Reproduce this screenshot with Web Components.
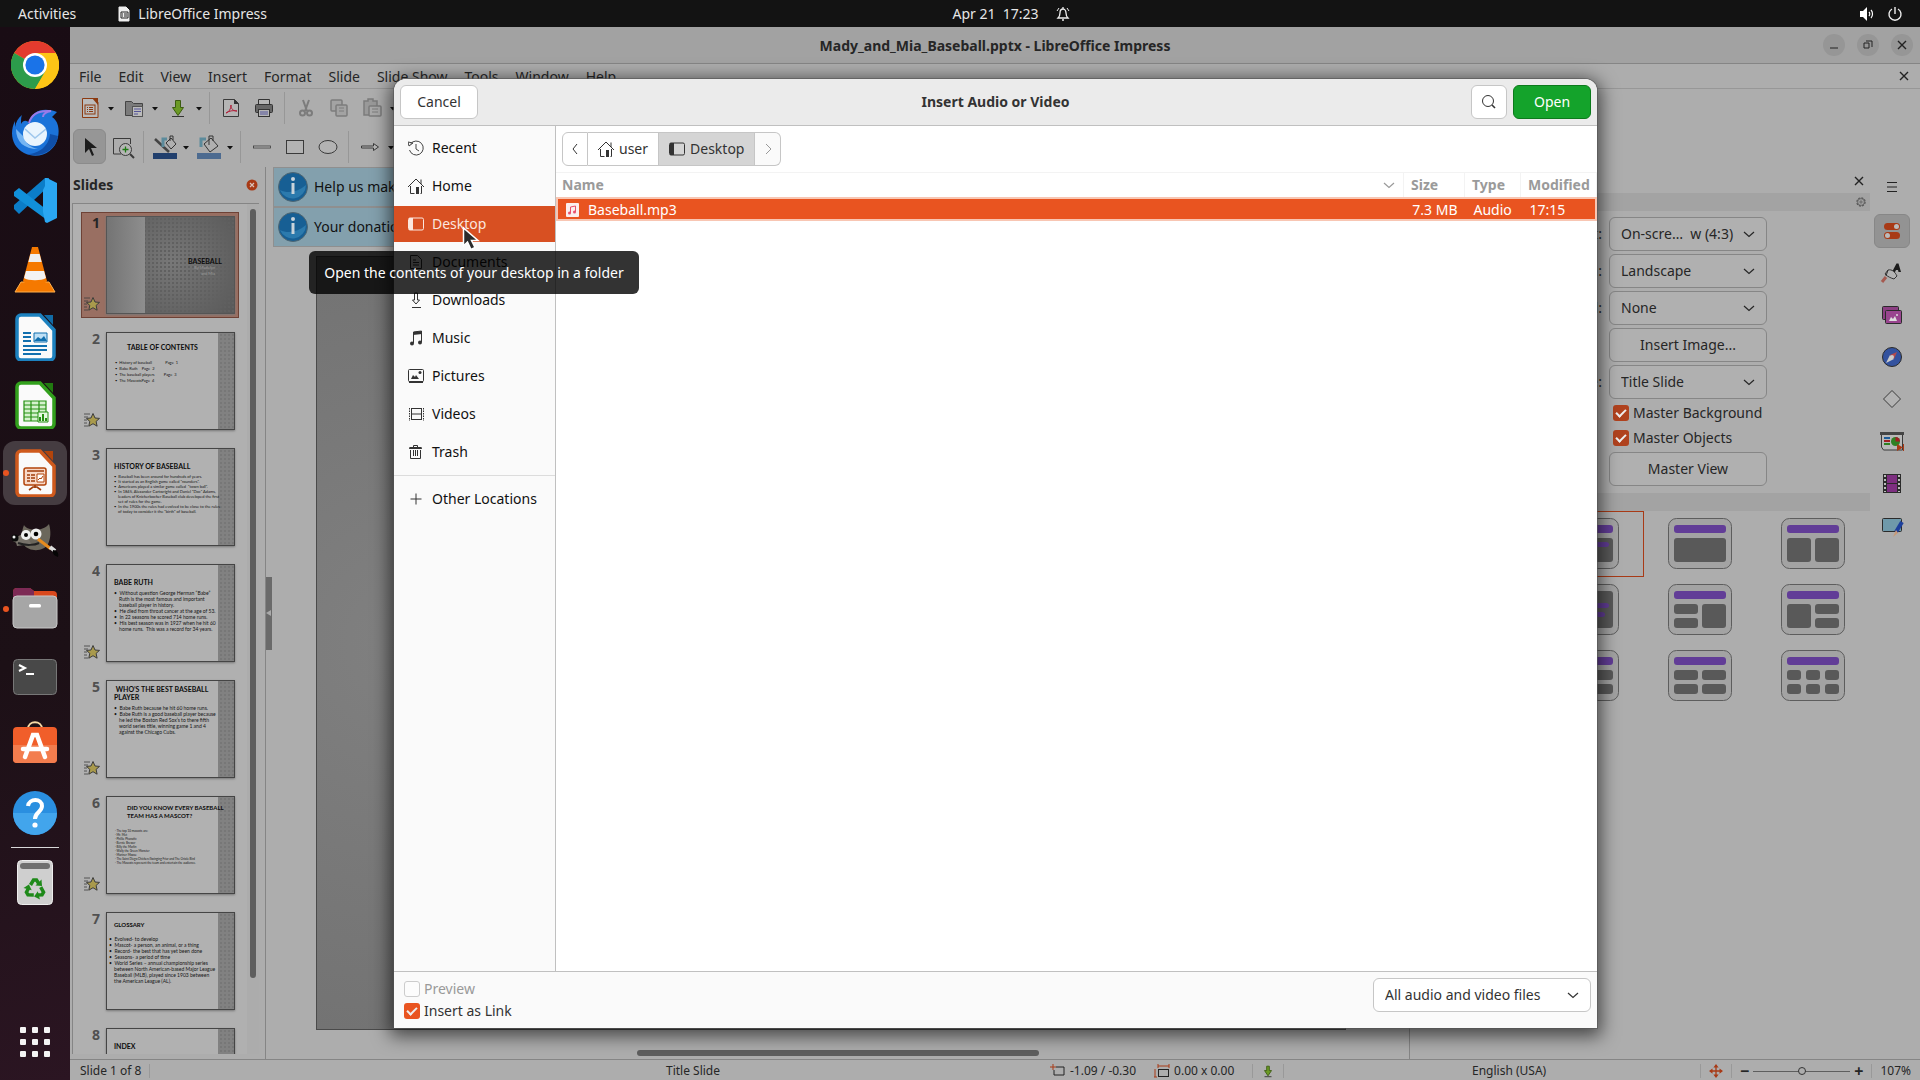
<!DOCTYPE html>
<html lang="en">
<head>
    <meta charset="UTF-8">
    <meta name="viewport" content="width=device-width, initial-scale=1.0">
    <title>LibreOffice Impress</title>
    <style>
        html, body{
            margin:0;
            height:100%;
        }
        body{
            --line:#858585;
            --accent:#e95420;
            display:flex;
            flex-direction:column;
            overflow:hidden;
            background:#adadad;
            color:#262626;
            font:14px/20px "Noto Sans", "Open Sans", sans-serif;
        }
        .desktop{
            flex:1;
            display:flex;
            min-height:0;
        }
    </style>
</head>
<body>
    <top-bar></top-bar>
    <div class="desktop">
        <app-dock></app-dock>
        <impress-window>Mady_and_Mia_Baseball.pptx - LibreOffice Impress</impress-window>
    </div>
    <file-dialog>Insert Audio or Video</file-dialog>
    <tool-tip>Open the contents of your desktop in a folder</tool-tip>
    <mouse-pointer></mouse-pointer>
</body>
<script>
    // name: [viewBox size, markup]
    const ICONS = {
        // ---- top bar ----
        doc: [16, '<path d="M3 1h7l3 3v11H3z" fill="#eee" stroke="#eee" stroke-linejoin="round"/><path d="M5 6h7v6H5zM6 8h1m1 0h3M6 10h1m1 0h3" fill="none" stroke="#222"/>'],
        bell: [16, '<path d="M3 12h10c-1-1-2-2-2-5 0-2-1-4-3-4S5 5 5 7c0 3-1 4-2 5zM7 14h2M8 1v2" fill="none" stroke="#eee" stroke-width="1.300"/><path d="M2 5l2-3M14 5l-2-3" stroke="#eee"/>'],
        sound: [16, '<path d="M1 5h3l4-4v14l-4-4H1z" fill="#fff"/><path d="M10 6c1 1 1 3 0 4M12 4c2 2 2 6 0 8" fill="none" stroke="#fff" stroke-width="1.2"/>'],
        power: [16, '<path d="M5 3a6 6 0 1 0 6 0M8 1v7" fill="none" stroke="#eee" stroke-width="1.4"/>'],
        // ---- dock ----
        chrome: [48, '<circle cx="24" cy="24" r="24" fill="#fbbc05"/><path d="M24 24 3.2 12A24 24 0 0 1 44.8 12z" fill="#e33b2e"/><path d="M3.2 12A24 24 0 0 0 24 48l11-18-11-6z" fill="#2c9c4b"/><path d="M24 12h20.8A24 24 0 0 1 24 48l10.4-18z" fill="#fdc516"/><circle cx="24" cy="24" r="12" fill="#fff"/><circle cx="24" cy="24" r="9.6" fill="#1a73e8"/>'],
        thunderbird: [48, '<path d="M4 12C-2 24 1 38 13 44c14 7 31 0 34-16 2-10-1-17-6-20l5-5C38 0 29 0 24 4c-4 3-5 7-6 10-2-3-6-3-8 1 0-4 0-7 1-9-4 3-6 7-7 12z" fill="#1b73d9"/><path d="M18 14c2-8 8-13 22-12-5 1-8 3-8 6" fill="none" stroke="#9b7be8" stroke-width="2"/><path d="M47 27C45 41 31 49 16 45c12 0 22-8 23-20z" fill="#0f4fa8"/><path d="M5 20c0 13 8 20 22 20-8-2-13-6-14-12z" fill="#75b5f3"/><circle cx="24" cy="25" r="12" fill="#e9f4fd"/><path d="M14 20l10 9 11-9" fill="none" stroke="#9fc7ec" stroke-width="1.6"/>'],
        vscode: [48, '<path d="M3 32l5 5 30-28V1h-4L3 28z" fill="#0b7dc8"/><path d="M3 15l5-4 28 22v10L3 19z" fill="#1190da"/><path d="M34 1v8l-2 4v22l2 10 2 1 10-5V6L36 1z" fill="#2aa7f2"/>'],
        vlc: [48, '<path d="M10 37h28l6 10H4z" fill="#f57900" stroke="#ffb04d"/><path d="M21 2h6l9 34c-3 5-21 5-24 0z" fill="#f57900"/><path d="M19.4 9h9.2l2 8H17.4z" fill="#eee"/><path d="M15 26h18l2 7c-4 3-18 3-22 0z" fill="#f3f3f3"/>'],
        writer: [48, '<path d="M10 2h19l14 15v26a4 4 0 0 1-4 4H10a4 4 0 0 1-4-4V6a4 4 0 0 1 4-4z" fill="#fafafa" stroke="#1c81bf" stroke-width="3.5"/><path d="M33 2h9v10z" fill="#116ba6"/><g fill="#116fae"><path d="M12 19h8v2h-8zM12 23h8v2h-8zM12 27h8v2h-8zM12 32h24v2H12zM12 36h24v2H12zM12 40h18v2H12z"/></g><path d="M23 20h13v9H23z" fill="#bfe0f6" stroke="#116fae"/><path d="M23 28l4-4 3 2 3-3 3 5z" fill="#116fae"/>'],
        calc: [48, '<path d="M10 2h19l14 15v26a4 4 0 0 1-4 4H10a4 4 0 0 1-4-4V6a4 4 0 0 1 4-4z" fill="#fafafa" stroke="#32a01c" stroke-width="3.5"/><path d="M33 2h9v10z" fill="#217a10"/><path d="M13 20h22v20H13zM13 24h22M13 28h22M13 32h22M13 36h22M20 20v20M28 20v20" fill="#d5f2cd" stroke="#258f12" stroke-width="1.2"/><path d="M27 31h10v10H27z" fill="#e4f7df" stroke="#258f12"/><path d="M29 40v-4M32 40v-7M35 40v-3" stroke="#258f12" stroke-width="2"/>'],
        impress: [48, '<path d="M10 2h19l14 15v26a4 4 0 0 1-4 4H10a4 4 0 0 1-4-4V6a4 4 0 0 1 4-4z" fill="#fafafa" stroke="#cf5a1d" stroke-width="3.5"/><path d="M33 2h9v10z" fill="#b2440b"/><rect x="13" y="19" width="22" height="17" rx="2" fill="#f8d9c8" stroke="#b2440b" stroke-width="1.5"/><path d="M16 22h17M16 26h3m1 0h4M16 29h3m1 0h4M16 32h3m1 0h4M24 36v3M18 41l4-3h4l4 3" fill="none" stroke="#a03c0a" stroke-width="1.6"/><path d="M26 25h7v8h-7zM27 31l2-2 1 1 2-3" fill="#fff" stroke="#b2440b"/>'],
        gimp: [48, '<g transform="translate(0 5)"><path d="M12 16c-2-5 0-10 1-13 4 7 20 6 25-1 2 7 2 14-1 20-4 8-19 8-24 1C7 22 5 21 2 19l3-2z" fill="#6b675c"/><path d="M4 16l11-6 5 12-14 2z" fill="#77726a"/><circle cx="15" cy="13" r="5" fill="#eee"/><circle cx="25" cy="12" r="5.5" fill="#eee"/><circle cx="15" cy="13" r="2"/><circle cx="25" cy="12" r="2.3"/><circle cx="4" cy="16" r="3.5" fill="#0a0a0a"/><circle cx="3" cy="15" r="1.500" fill="#eee"/><path d="M7 21c8 3 17 2 21 0" stroke="#222" stroke-width="2" fill="none"/><path d="M27 17l13 10" stroke="#e68a1d" stroke-width="3"/><path d="M39 25l5 4" stroke="#ddd" stroke-width="4"/><path d="M42 28c4 0 6 3 5 7-3-1-6-3-5-7z" fill="#050505"/></g>'],
        files: [48, '<path d="M2 13V7a4 4 0 0 1 4-4h13l4 3h19a4 4 0 0 1 4 4v8H2z" fill="#d9481c"/><path d="M2 13V7a4 4 0 0 1 4-4h13l4 3v10H2z" fill="#7d2a55"/><rect x="2" y="11" width="44" height="32" rx="4" fill="#a6a6a6" stroke="#c8c8c8"/><rect x="18" y="19" width="12" height="3.5" rx="1.5" fill="#fff"/>'],
        terminal: [48, '<rect x="2.500" y="6.500" width="43" height="35" rx="4" fill="#484848" stroke="#777"/><path d="M8 12l6 3-6 3M15 21h8" fill="none" stroke="#fff" stroke-width="2"/>'],
        store: [48, '<path d="M17 8c0-9 14-9 14 0" fill="none" stroke="#f7d9a6" stroke-width="2"/><rect x="2" y="6" width="44" height="36" rx="4" fill="#f15e2a"/><path d="M2 24h44v14a4 4 0 0 1-4 4H6a4 4 0 0 1-4-4z" fill="#f37d4e"/><path d="M14 36l8-22h4l8 22M12 28h24" fill="none" stroke="#fff" stroke-width="4.500" stroke-linecap="round"/>'],
        help: [48, '<circle cx="24" cy="24" r="22" fill="#2a8fe0"/><path d="M2 24a22 22 0 0 0 44 0z" fill="#42a5ec"/><path d="M17 17c1-8 14-8 14 0 0 6-7 6-7 13" fill="none" stroke="#fff" stroke-width="4"/><circle cx="24" cy="36" r="2.600" fill="#fff"/>'],
        bin: [48, '<rect x="6.500" y="2.500" width="35" height="44" rx="4" fill="#cfcfcf" stroke="#eee"/><rect x="9" y="5" width="30" height="6" rx="3" fill="#6f6f6f"/>' + [0, 120, 240].map(a => `<g transform="rotate(${a} 24 31)"><path d="M19.500 27l3-5h3l2.500 4" fill="none" stroke="#1f8a1a" stroke-width="3.500"/><path d="M24.500 27.500l6.500.5-.5-6.500z" fill="#1f8a1a"/></g>`).join('')],
        grid: [48, '<g fill="#f4f4f4">' + [9, 21, 33].map(y => [9, 21, 33].map(x => `<rect x="${x}" y="${y}" width="6" height="6" rx="1"/>`).join('')).join('') + '</g>'],
        // ---- window chrome ----
        min: [16, '<path d="M4 11h8" stroke="#222"/>'],
        max: [16, '<path d="M4 6h5v5H4zM6 4h6v6" fill="none" stroke="#222"/>'],
        close: [16, '<path d="M4 4l8 8M12 4l-8 8" stroke="#222" stroke-width="1.400"/>'],
        // ---- toolbars ----
        newdoc: [24, '<path d="M7 2.500h9l4 4v15H4.500V2.500z" fill="#bbb" stroke="#8c3a10"/><path d="M14 2h6v7z" fill="#8c3a10"/><rect x="7" y="9" width="10" height="9" fill="none" stroke="#8c3a10"/><path d="M9 11.500h1m1 0h4M9 13.500h1m1 0h4M9 15.500h1m1 0h4" stroke="#8c3a10"/>'],
        open: [24, '<path d="M3.500 19.500V5.500h6l2 2h9v12z" fill="#7b7b7b" stroke="#444"/><rect x="10.500" y="10.500" width="10" height="10" fill="#bbb" stroke="#555"/><path d="M12 13h7M12 15.500h7M12 18h4" stroke="#55559a"/>'],
        save: [24, '<path d="M9.500 4.500h5v7h3l-5.500 8-5.500-8h3z" fill="#6b9a25" stroke="#3c5c10"/><path d="M6 20.500h12" stroke="#333"/>'],
        saved: [16, '<path d="M6.500 2.500h3v5h2.500l-4 6-4-6h2.500z" fill="#6b9a25" stroke="#3c5c10"/><path d="M4 14.500h8" stroke="#333"/>'],
        pdf: [24, '<path d="M4.500 3.500h11l4 4v13h-15z" fill="#b5b5b5" stroke="#3a3a3a"/><path d="M15 3v5h5z" fill="#333"/><path d="M7 17c3-1 5-4 5-8 0 4 2 6 6 6-4-1-8 0-11 2z" fill="none" stroke="#b0203a"/>'],
        print: [24, '<path d="M6.500 9V3.500h11V9" fill="#b5b5b5" stroke="#333"/><rect x="3.500" y="8.500" width="17" height="8" rx="1" fill="#666" stroke="#333"/><rect x="6.500" y="13.500" width="11" height="7" fill="#b5b5b5" stroke="#333"/><path d="M8 16h8M8 18h8" stroke="#55559a"/>'],
        cut: [24, '<g fill="none" stroke="#7c7c7c" stroke-width="2"><path d="M9 4l4 11M15 4l-4 11"/><circle cx="8.500" cy="17" r="2.500"/><circle cx="15.500" cy="17" r="2.500"/></g>'],
        copy: [24, '<g fill="#a3a3a3" stroke="#7c7c7c" stroke-width="1.500"><rect x="4" y="4" width="11" height="11" rx="1"/><rect x="9" y="9" width="11" height="11" rx="1"/></g><path d="M12 12h5M12 15h5" stroke="#7c7c7c"/>'],
        paste: [24, '<g fill="#999" stroke="#7c7c7c" stroke-width="1.500"><path d="M4 5h4V3h5v2h4v14H4z"/><rect x="9" y="10" width="12" height="10" rx="1" fill="#a9a9a9"/></g><path d="M12 13h6M12 16h6" stroke="#7c7c7c"/>'],
        pointer: [24, '<path d="M7 3v15l4-4 3 7 2-1-3-7h6z" fill="#1c1c1c"/>'],
        zoom: [24, '<path d="M10 19H2.500V3.500h17V9" fill="none" stroke="#3a3a3a"/><circle cx="14.500" cy="14.500" r="6" fill="#b5b5b5" stroke="#3a3a3a"/><path d="M19 19l4 4" stroke="#3a3a3a" stroke-width="2"/><path d="M11.500 14.500h6M14.500 11.500v6" stroke="#1d7a12" stroke-width="1.300"/>'],
        linecolor: [24, '<path d="M2 4l14 13" stroke="#444" stroke-width="2.500"/><path d="M10 12V4h4" fill="none" stroke="#5c8b9c" stroke-width="3"/><path d="M13 8l5-5 5 6-5 5zM17 6V1h3v4" fill="#b0b0b0" stroke="#333"/><path d="M0 18h24v6H0z" fill="#213f6d"/>'],
        fillcolor: [24, '<path d="M4 12V4h5" fill="none" stroke="#5c8b9c" stroke-width="3"/><path d="M7 9l7-6 7 8-8 6zM12 10V1h4v5" fill="#b0b0b0" stroke="#333"/><path d="M0 18h24v6H0z" fill="#4d6b90"/>'],
        line: [24, '<rect x="3.500" y="11" width="17" height="2" fill="#bbb" stroke="#3a3a3a" stroke-width=".8"/>'],
        rect: [24, '<rect x="3.500" y="5.500" width="17" height="13" fill="#b3b3b3" stroke="#3a3a3a"/>'],
        ellipse: [24, '<ellipse cx="12" cy="12" rx="9" ry="6.500" fill="#b3b3b3" stroke="#3a3a3a"/>'],
        arrow: [24, '<path d="M3.500 11h12V8.500l5 3.500-5 3.500V13h-12z" fill="#b8b8b8" stroke="#3a3a3a"/>'],
        caret: [10, '<path d="M2 4h6L5 7.500z" fill="#111"/>'],
        closered: [12, '<circle cx="6" cy="6" r="5.500" fill="#a83a16"/><path d="M4 4l4 4M8 4l-4 4" stroke="#d9c3bb" stroke-width="1.200"/>'],
        info: [32, '<circle cx="16" cy="16" r="14.500" fill="#175f94" stroke="#4f6672"/><path d="M3 19c8 4 18 2 26-5a13.500 13.500 0 0 1-26 5z" fill="#2c7aad"/><circle cx="16" cy="8" r="2" fill="#c8d3da"/><path d="M16 12v11" stroke="#c8d3da" stroke-width="3"/>'],
        star: [16, '<path d="M9 1.500l2 4.500 4.500.4-3.400 3 1 4.800L9 11.700l-4.200 2.500 1-4.800-3.300-3L7 6z" fill="#a99a4c" stroke="#3c3c3c"/><path d="M0 2h6M0 5h4M0 8h3M0 11h3M0 14h4" stroke="#3c3c3c" stroke-width=".8"/>'],
        // ---- sidebar ----
        gear: [16, '<circle cx="8" cy="8" r="5.500" fill="none" stroke="#555" stroke-width="1.500" stroke-dasharray="2.800 1.500"/><circle cx="8" cy="8" r="4.500" fill="none" stroke="#555"/><circle cx="8" cy="8" r="1.500" fill="none" stroke="#555"/>'],
        menu: [16, '<path d="M3 3.500h10M3 8h10M3 12.500h10" stroke="#222"/>'],
        props: [24, '<rect x="4" y="4" width="16" height="7" rx="3.500" fill="#a83a16"/><rect x="4" y="13" width="16" height="7" rx="3.500" fill="#a83a16"/><circle cx="16.500" cy="7.500" r="2.500" fill="#bbb"/><circle cx="7.500" cy="16.500" r="2.500" fill="#bbb"/>'],
        styles: [24, '<path d="M12 11l4.500-8.500h2L21 11h-2.500l-.5-2h-2l-1 2z" fill="#1c1c1c"/><path d="M5 13l3-4c4-1 7 2 9 6l-3 3c-3-1-6-2-9-5zM8 9l-2 6" fill="#b3b3b3" stroke="#333"/><path d="M6 16l-4 5" stroke="#a55a50" stroke-width="3"/>'],
        gallery: [24, '<rect x="2.500" y="3.500" width="16" height="13" rx="1" fill="#8b3f82" stroke="#2b2b2b"/><rect x="5.500" y="7.500" width="16" height="13" rx="1" fill="#99458f" stroke="#2b2b2b"/><path d="M9 18l2-4 2 2 2-3 2 5z" fill="#ddd"/><circle cx="17" cy="12" r="1" fill="#ddd"/>'],
        navigator: [24, '<circle cx="12" cy="12" r="9.500" fill="#33529f" stroke="#2b2b2b"/><path d="M6 18l4-8 4 4z" fill="#ccc"/><path d="M17 7l-7 3 4 4z" fill="#b54b4b"/><circle cx="12" cy="12" r="2" fill="#ccc"/>'],
        shapes: [24, '<path d="M12 3.500l8.500 8.500-8.500 8.500L3.500 12z" fill="#b3b3b3" stroke="#3a3a3a"/>'],
        transition: [24, '<path d="M0 3h24v3H0z" fill="#444"/><path d="M1.500 6v12l2 3h19V6" fill="#b8b8b8" stroke="#3a3a3a"/><path d="M4 9h6" stroke="#1b5b99" stroke-width="2"/><path d="M4 12h6" stroke="#a31d24" stroke-width="2"/><path d="M4 15h6" stroke="#2f8023" stroke-width="2"/><circle cx="15.500" cy="12.500" r="4.500" fill="#2f8023"/><path d="M15.500 12.500V8a4.500 4.500 0 0 1 4.500 4.500z" fill="#a31d24"/><path d="M17 15l6 3.500-6 3.500zM23 15h1v7h-1z" fill="#a83a16"/>'],
        film: [24, '<rect x="3" y="3" width="18" height="19" fill="#2b2b2b"/><path d="M7 4h10v8H7zM7 13h10v8H7z" fill="#7d2f80"/><path d="M5 4v17M19 4v17" stroke="#bbb" stroke-width="2" stroke-dasharray="2 2"/>'],
        master: [24, '<rect x="2.500" y="5.500" width="19" height="13" rx="1" fill="#6f99aa" stroke="#2b2b2b"/><path d="M22 9l-6 10" stroke="#1d3f9c" stroke-width="4"/><path d="M16 17l-3 7 5-4z" fill="#c99a77"/>'],
        // ---- status bar ----
        pos: [16, '<path d="M6 4h8v8H4V7" fill="none" stroke="#222"/><path d="M0 4h6M3 1v6" stroke="#a83a16"/>'],
        size: [16, '<rect x="4.500" y="6.500" width="10" height="7" fill="none" stroke="#222"/><path d="M4 3h11M4 1v4M15 1v4M1 6v8M0 14h3" stroke="#a83a16"/>'],
        move: [16, '<path d="M8 2v12M2 8h12" stroke="#a83a16" stroke-width="1.500"/><path d="M8 0l3 4H5zM8 16l3-4H5zM0 8l4-3v6zM16 8l-4-3v6z" fill="#a83a16"/>'],
        // ---- file dialog ----
        search: [16, '<circle cx="7" cy="7" r="5.500" fill="none" stroke="#333"/><path d="M11 11l3 3" stroke="#333" stroke-width="1.600"/>'],
        recent: [16, '<path d="M2.500 4a7 7 0 1 1-1 6" fill="none" stroke="#444"/><path d="M0 2l5 1-4 3zM8 4v5l3 2" stroke="#444" fill="none"/>'],
        home: [16, '<path d="M0 9l8-8 8 8M13 6V1.500M2.500 8v7.500h4M13.500 8v7.500h-1" fill="none" stroke="#333"/><path d="M8 9h3v7H8z" fill="#333"/>'],
        desktop: [16, '<rect x=".5" y="2" width="15" height="12" rx="1.500" fill="none" stroke="currentColor"/><path d="M1 2h4v12H1z" fill="currentColor"/>'],
        document: [16, '<path d="M2.500 1.500h7l4 4v9h-11zM5 6h3M5 8.500h6M5 11h6" fill="none" stroke="#333"/>'],
        download: [16, '<path d="M6.500 1v7h-2l3.500 4 3.500-4h-2V1zM4 15.500h9" fill="none" stroke="#333"/>'],
        music: [16, '<path d="M5.500 13V2l8-1v11" fill="none" stroke="#333"/><path d="M5 2l9-1v3L5 5z" fill="#333"/><circle cx="4" cy="13.500" r="2" fill="#333"/><circle cx="12" cy="12.500" r="2" fill="#333"/>'],
        picture: [16, '<rect x=".5" y="1.500" width="15" height="12" rx="1" fill="none" stroke="#333"/><path d="M1 13h14v2H1zM3 11l2-4 2 2 1-2 3 4z" fill="#333"/><circle cx="12" cy="4.500" r="1.500" fill="#333"/>'],
        video: [16, '<path d="M3.500 2v12M13.500 2v12M3 2.500h11M3 8h11M3 13.500h11" stroke="#333"/><path d="M1.500 2v13M15.500 2v13" stroke="#333" stroke-dasharray="1.500 1"/>'],
        trash: [16, '<path d="M1 4h13M5.500 3V1.500h4V3M2.500 6v8.500h10V6M5.500 6v6M7.500 6v6M9.500 6v6" fill="none" stroke="#333"/><path d="M2 3h11l1 2H1z" fill="#333"/>'],
        plus: [16, '<path d="M8 2.500v11M2.500 8h11" stroke="#333"/>'],
        left: [16, '<path d="M10 3L6 8l4 5" fill="none" stroke="#333"/>'],
        right: [16, '<path d="M6 3l5 5-5 5" fill="none" stroke="#999"/>'],
        down: [16, '<path d="M3 6l5 4.500L13 6" fill="none" stroke="currentColor" stroke-width="1.200"/>'],
        audio: [16, '<rect x="2" y="1" width="13" height="14" rx="1" fill="#fbeeee"/><path d="M6.500 11V5l5-1v6" fill="none" stroke="#e8506c"/><circle cx="5.500" cy="11" r="1.500" fill="#e8506c"/><circle cx="10.500" cy="10" r="1.500" fill="#e8506c"/>']
    };

    // Registers an element whose shadow root is cloned from the given markup.
    function component(name, html, setup) {
        const template = document.createElement('template');
        template.innerHTML = html;
        customElements.define(name, class extends HTMLElement {
            constructor() {
                super();
                this.attachShadow({ mode: 'open' }).appendChild(template.content.cloneNode(true));
            }
            connectedCallback() {
                if (setup) setup(this, this.shadowRoot);
            }
        });
    }

    component('ui-icon', `
        <style>
            :host{ display:inline-block; flex:none; }
            svg{ display:block; }
        </style>
        <svg aria-hidden="true"></svg>
    `, (el, root) => {
        const [box, body] = ICONS[el.getAttribute('name')];
        const size = el.getAttribute('size') || box;
        const svg = root.querySelector('svg');
        svg.setAttribute('viewBox', `0 0 ${box} ${box}`);
        svg.setAttribute('width', size);
        svg.setAttribute('height', size);
        svg.innerHTML = body;
    });

    component('top-bar', `
        <style>
            :host{
                display:grid;
                grid-template-columns:1fr auto 1fr;
                align-items:center;
                height:27px;
                padding:0 17px 0 18px;
                background:#131313;
                color:#e6e6e6;
            }
            div{ display:flex; align-items:center; }
            button{ all:unset; }
            .app{ display:flex; align-items:center; gap:6px; margin-left:40px; }
            .clock{ gap:16px; padding-left:102px; }
            .status{ justify-content:flex-end; gap:12px; }
        </style>
        <div><button>Activities</button><button class="app"><ui-icon name="doc"></ui-icon>LibreOffice Impress</button></div>
        <div class="clock"><button>Apr 21&nbsp; 17:23</button><ui-icon name="bell"></ui-icon></div>
        <div class="status"><ui-icon name="sound"></ui-icon><ui-icon name="power"></ui-icon></div>
    `);

    component('dock-item', `
        <style>
            :host{ display:flex; align-items:center; height:68px; }
            button{
                all:unset;
                display:flex;
                align-items:center;
                justify-content:center;
                width:64px;
                height:64px;
                margin-left:3px;
                border-radius:12px;
            }
            :host([active]) button{ background:#453c41; }
            i{
                position:absolute;
                left:3px;
                width:6px;
                height:6px;
                border-radius:3px;
                background:var(--accent);
                display:none;
            }
            :host([running]) i{ display:block; }
        </style>
        <i></i><button></button>
    `, (el, root) => {
        const button = root.querySelector('button');
        button.setAttribute('aria-label', el.getAttribute('icon'));
        button.innerHTML = `<ui-icon name="${el.getAttribute('icon')}"></ui-icon>`;
    });

    component('app-dock', `
        <style>
            :host{
                display:flex;
                flex-direction:column;
                flex:none;
                width:70px;
                padding:4px 0;
                box-sizing:border-box;
                background:linear-gradient(165deg,#190c14,#1c1016 60%,#2b1522);
            }
            hr{ width:48px; height:1px; margin:0 auto; border:0; background:#d8d8d8; }
            .apps{ margin-top:auto; }
        </style>
        <dock-item icon="chrome"></dock-item>
        <dock-item icon="thunderbird"></dock-item>
        <dock-item icon="vscode"></dock-item>
        <dock-item icon="vlc"></dock-item>
        <dock-item icon="writer"></dock-item>
        <dock-item icon="calc"></dock-item>
        <dock-item icon="impress" active running></dock-item>
        <dock-item icon="gimp"></dock-item>
        <dock-item icon="files" running></dock-item>
        <dock-item icon="terminal"></dock-item>
        <dock-item icon="store"></dock-item>
        <dock-item icon="help"></dock-item>
        <hr>
        <dock-item icon="bin"></dock-item>
        <dock-item class="apps" icon="grid"></dock-item>
    `);

    component('title-bar', `
        <style>
            :host{
                display:grid;
                grid-template-columns:1fr auto 1fr;
                align-items:center;
                height:36px;
                border-bottom:1px solid var(--line);
                background:#a2a2a2;
                font-weight:bold;
            }
            div{
                grid-column:3;
                display:flex;
                justify-content:flex-end;
                gap:12px;
                padding-right:7px;
            }
            button{
                all:unset;
                display:flex;
                padding:3px;
                border-radius:11px;
                background:#969696;
            }
            .name{ padding-top:1px; }
        </style>
        <span></span>
        <span class="name"><slot></slot></span>
        <div>
            <button aria-label="Minimize"><ui-icon name="min"></ui-icon></button>
            <button aria-label="Restore"><ui-icon name="max"></ui-icon></button>
            <button aria-label="Close"><ui-icon name="close"></ui-icon></button>
        </div>
    `);

    component('menu-bar', `
        <style>
            :host{
                display:flex;
                align-items:center;
                height:24px;
                padding:0 8px 0 9px;
                border-bottom:1px solid #979797;
            }
            nav{ flex:1; display:flex; gap:17px; padding-top:1px; }
            button{ all:unset; display:flex; }
        </style>
        <nav>
            <button>File</button><button>Edit</button><button>View</button><button>Insert</button>
            <button>Format</button><button>Slide</button><button>Slide Show</button>
            <button>Tools</button><button>Window</button><button>Help</button>
        </nav>
        <button aria-label="Close document"><ui-icon name="close"></ui-icon></button>
    `);

    component('tool-button', `
        <style>
            :host{ display:flex; align-items:center; }
            button{ all:unset; display:flex; }
            .main{
                justify-content:center;
                align-items:center;
                box-sizing:border-box;
                width:33px;
                height:35px;
                border:1px solid transparent;
                border-radius:6px;
            }
            .more{ width:11px; }
            :host([pressed]) .main{ background:#969696; border-color:#8b8b8b; }
            :host(:not([menu])) .more{ display:none; }
        </style>
        <button class="main"></button>
        <button class="more" aria-label="More"><ui-icon name="caret"></ui-icon></button>
    `, (el, root) => {
        const button = root.querySelector('.main');
        button.setAttribute('aria-label', el.getAttribute('icon'));
        button.innerHTML = `<ui-icon name="${el.getAttribute('icon')}"></ui-icon>`;
    });

    component('tool-bar', `
        <style>
            :host{ display:flex; align-items:center; height:37px; padding:0 0 2px 3px; }
            ::slotted(hr){
                width:1px;
                height:32px;
                margin:0 4px;
                border:0;
                background:#979797;
            }
        </style>
        <slot></slot>
    `);

    component('slide-thumb', `
        <style>
            :host{
                display:flex;
                box-sizing:border-box;
                height:106px;
                width:158px;
                margin-bottom:10px;
                padding:3px;
                border:1px solid transparent;
            }
            :host([selected]){ background:#996f62; border-color:#6e4236; }
            .side{
                display:flex;
                flex-direction:column;
                justify-content:space-between;
                align-items:flex-end;
                width:15px;
                padding:0 6px 2px 0;
                font-weight:bold;
                line-height:14px;
                color:#505050;
            }
            :host([selected]) .side{ color:#262626; }
            .side ui-icon{ visibility:hidden; }
            :host([effect]) .side ui-icon{ visibility:visible; }
            .page{
                flex:1;
                min-width:0;
                overflow:hidden;
                border:1px solid #454545;
                background:radial-gradient(#777 1px,transparent 1px) 0 0/4px 4px,#818181;
                box-shadow:0 1px 2px #777;
                font-family:Lato, sans-serif;
                color:#151515;
                white-space:nowrap;
            }
            .paper{ height:100%; margin-right:16px; background:#b1b1b1; }
            :host([cover]) .page{
                background:linear-gradient(90deg,#747474,#8e8e8e 38px,transparent 38px),
                    radial-gradient(#606060 1px,transparent 1px) 0 0/4px 4px,
                    radial-gradient(circle at 65px 45px,#787878,#585858);
                border-color:#555;
            }
            :host([cover]) .paper{ margin:0; background:none; }
        </style>
        <div class="side"><span></span><ui-icon name="star"></ui-icon></div>
        <div class="page"><div class="paper"><slot></slot></div></div>
    `, (el, root) => {
        root.querySelector('span').textContent = el.getAttribute('number');
    });

    component('slides-panel', `
        <style>
            :host{
                display:flex;
                flex-direction:column;
                flex:none;
                width:195px;
                border-right:1px solid var(--line);
            }
            header{
                display:flex;
                align-items:center;
                justify-content:space-between;
                height:36px;
                padding:0 7px 0 3px;
                font-weight:bold;
            }
            button{ all:unset; display:flex; }
            .list{
                flex:1;
                min-height:0;
                display:flex;
                justify-content:space-between;
                overflow:hidden;
                margin:0 6px 5px 2px;
                border-top:1px solid var(--line);
                border-left:1px solid var(--line);
                background:#b0b0b0;
            }
            .slides{ padding:8px 0 0 8px; }
            .track{ width:12px; background:#acacac; padding-top:5px; }
            .thumb{ width:6px; height:91%; margin-left:3px; border-radius:3px; background:#5e5e5e; }
            h6{ margin:0; font:bold 7px/8px "Liberation Sans Narrow", Lato, sans-serif; color:#0c0c0c; }
            p{ margin:0; font-size:4px; line-height:5px; white-space:pre; }
            .big p{ font-size:5px; line-height:6px; }
            .toc{ padding:10px 0 0 8px; }
            .toc h6{ margin:0 0 9px 12px; }
            .toc p{ margin-bottom:1px; }
            .std{ padding:13px 0 0 7px; }
            .std h6{ margin-bottom:4px; }
            .who{ padding-top:4px; }
            .mascot{ padding:7px 0 0 8px; }
            .mascot h6{ margin-left:12px; font-size:6px; }
            .mascot h6 + p{ margin-top:9px; }
            .mascot p{ font-size:3px; line-height:4px; }
            .gloss{ padding:8px 0 0 2px; }
            .gloss h6{ margin:0 0 7px 5px; font-size:6px; }
            .cover{ padding:40px 12px 0 0; text-align:right; }
            .cover p{ padding-right:7px; color:#9b9b9b; line-height:6px; }
        </style>
        <header>Slides<button aria-label="Close panel"><ui-icon name="closered"></ui-icon></button></header>
        <div class="list">
            <div class="slides">
                <slide-thumb number="1" selected effect cover><div class="cover"><h6>BASEBALL</h6><p>By Madelyn</p><p>and Mia</p></div></slide-thumb>
                <slide-thumb number="2" effect><div class="toc"><h6>TABLE OF CONTENTS</h6><p>•  History of baseball             Page  1</p><p>•  Babe Ruth    Page  2</p><p>•  The baseball players         Page  3</p><p>•  The MascotsPage  4</p></div></slide-thumb>
                <slide-thumb number="3"><div class="std"><h6>HISTORY OF BASEBALL</h6><p>•  Baseball has been around for hundreds of years.</p><p>•  It started as an English game called "rounders".</p><p>•  Americans played a similar game called  "town ball".</p><p>•  In 1845, Alexander Cartwright and Daniel "Doc" Adams,</p><p>    leaders of Knickerbocker Baseball club developed the first</p><p>    set of rules for the game.</p><p>•  In the 1900s the rules had evolved to be close to the rules</p><p>    of today to consider it the "birth" of baseball.</p></div></slide-thumb>
                <slide-thumb number="4" effect><div class="std big"><h6>BABE RUTH</h6><p>•  Without question George Herman “Babe”</p><p>    Ruth is the most famous and important</p><p>    baseball player in history.</p><p>•  He died from throat cancer at the age of 53.</p><p>•  In 22 seasons he scored 714 home runs.</p><p>•  His best season was in 1927 when he hit 60</p><p>    home runs.  This was a record for 34 years.</p></div></slide-thumb>
                <slide-thumb number="5" effect><div class="std who big"><h6>&nbsp;WHO’S THE BEST BASEBALL<br>PLAYER</h6><p>•  Babe Ruth because he hit 60 home runs.</p><p>•  Babe Ruth is a good baseball player because</p><p>    he led the Boston Red Sox’s to there fifth</p><p>    world series title, winning game 1 and 4</p><p>    against the Chicago Cubs.</p></div></slide-thumb>
                <slide-thumb number="6" effect><div class="mascot"><h6>DID YOU KNOW EVERY BASEBALL<br>TEAM HAS A MASCOT?</h6><p>· The top 10 mascots are:</p><p>· Mr. Met</p><p>· Phillie Phanatic</p><p>· Bernie Brewer</p><p>· Billy the Marlin</p><p>· Wally the Green Monster</p><p>· Mariner Moose</p><p>· The Saint Diego Chicken/Swinging Friar and The Oriole Bird</p><p>· The Mascots represent the team and entertain the audience.</p></div></slide-thumb>
                <slide-thumb number="7"><div class="gloss big"><h6>GLOSSARY</h6><p>•  Evolved- to develop</p><p>•  Mascot- a person, an animal, or a thing</p><p>•  Record- the best that has yet been done</p><p>•  Seasons- a period of time</p><p>•  World Series – annual championship series</p><p>    between North American-based Major League</p><p>    Baseball (MLB), played since 1903 between</p><p>    the American League (AL).</p></div></slide-thumb>
                <slide-thumb number="8"><div class="std"><h6>INDEX</h6></div></slide-thumb>
            </div>
            <div class="track"><div class="thumb"></div></div>
        </div>
    `);

    component('info-bar', `
        <style>
            :host{
                display:flex;
                align-items:center;
                gap:5px;
                height:38px;
                padding-left:3px;
                border:1px solid #8f8f8f;
                background:#83a0ad;
                color:#111;
                white-space:nowrap;
            }
        </style>
        <ui-icon name="info"></ui-icon><slot></slot>
    `);

    component('slide-canvas', `
        <style>
            :host{
                flex:1;
                display:flex;
                min-width:0;
                border-right:1px solid var(--line);
            }
            .sash{
                display:flex;
                align-items:center;
                align-self:center;
                width:6px;
                height:73px;
                background:#6a6a6a;
            }
            .sash::before{
                content:"";
                border:3px solid transparent;
                border-right:5px solid #aaa;
                border-left:0;
            }
            .edit{ flex:1; display:flex; flex-direction:column; min-width:0; margin-left:1px; }
            .page{
                flex:1;
                margin:9px 63px 0 43px;
                border:1px solid #4a4a4a;
                background:radial-gradient(circle at 9% 50%,#808080,#6c6c6c 60%);
            }
            .scroll{ width:402px; height:6px; margin:20px auto 3px 32%; border-radius:3px; background:#5e5e5e; }
        </style>
        <div class="sash"></div>
        <div class="edit">
            <info-bar>Help us mak</info-bar>
            <info-bar>Your donatio</info-bar>
            <div class="page"></div>
            <div class="scroll"></div>
        </div>
    `);

    component('drop-select', `
        <style>
            :host{ display:flex; align-items:center; }
            select{
                appearance:none;
                flex:1;
                min-width:0;
                height:34px;
                box-sizing:border-box;
                padding:0 26px 0 11px;
                border:1px solid var(--box-line,#868686);
                border-radius:6px;
                background:var(--box,#b0b0b0);
                color:inherit;
                font:inherit;
            }
            ui-icon{ margin:0 10px 0 -26px; pointer-events:none; }
        </style>
        <select><option></option></select><ui-icon name="down"></ui-icon>
    `, (el, root) => {
        root.querySelector('select').setAttribute('aria-label', el.getAttribute('label'));
        root.querySelector('option').textContent = el.getAttribute('value');
    });

    component('check-item', `
        <style>
            :host{ display:block; }
            label{ display:flex; align-items:center; gap:4px; }
            input{
                appearance:none;
                display:grid;
                place-items:center;
                width:16px;
                height:16px;
                margin:0;
                box-sizing:border-box;
                border:1px solid #ccc;
                border-radius:3px;
                background:#fcfcfc;
            }
            input:checked{ border-color:transparent; background:var(--check,var(--accent)); }
            input:checked::before{
                content:"";
                width:8px;
                height:4px;
                margin-bottom:3px;
                border:solid #eee;
                border-width:0 0 2px 2px;
                rotate:-45deg;
            }
            :host([disabled]){ color:#999; }
        </style>
        <label><input type="checkbox"><slot></slot></label>
    `, (el, root) => {
        const input = root.querySelector('input');
        input.checked = el.hasAttribute('checked');
        input.disabled = el.hasAttribute('disabled');
    });

    // Cells are [x, y, width, height] in a 64x51 page.
    const LAYOUTS = [
        { cells: [[6, 20, 52, 24]], lines: [[12, 24, 42, 5]], selected: true },
        { cells: [[6, 20, 52, 24]] },
        { cells: [[6, 20, 24, 24], [34, 20, 24, 24]] },
        { cells: [[6, 7, 52, 37]], lines: [[12, 19, 42, 5], [16, 28, 34, 5]], plain: true },
        { cells: [[6, 20, 24, 10], [6, 34, 24, 10], [34, 20, 24, 24]] },
        { cells: [[6, 20, 24, 24], [34, 20, 24, 10], [34, 34, 24, 10]] },
        { cells: [[6, 20, 52, 10], [6, 34, 52, 10]] },
        { cells: [[6, 20, 24, 10], [34, 20, 24, 10], [6, 34, 24, 10], [34, 34, 24, 10]] },
        { cells: [6, 25, 44].flatMap(x => [[x, 20, 14, 10], [x, 34, 14, 10]]) }
    ];

    component('layout-grid', `
        <style>
            :host{ display:grid; grid-template-columns:repeat(3,113px); justify-content:end; }
            button{
                all:unset;
                box-sizing:border-box;
                display:flex;
                align-items:center;
                justify-content:center;
                height:66px;
                padding-right:2px;
                border:1px solid transparent;
            }
            .selected{ border-color:#a83a16; }
        </style>
    `, (el, root) => {
        const rect = fill => ([x, y, w, h]) => `<rect x="${x}" y="${y}" width="${w}" height="${h}" rx="3" fill="${fill}"/>`;
        for (const { cells, lines = [], selected, plain } of LAYOUTS) {
            const button = document.createElement('button');
            button.setAttribute('aria-label', 'Layout');
            button.className = selected ? 'selected' : '';
            button.innerHTML = `<svg width="64" height="52">
                <rect x=".5" y=".5" width="63" height="50" rx="8" fill="#a3a3a3" stroke="#5d5d5d"/>
                ${plain ? '' : rect('#623d97')([6, 7, 52, 8])}
                ${cells.map(rect('#595959')).join('')}${lines.map(rect('#623d97')).join('')}</svg>`;
            root.appendChild(button);
        }
    });

    component('side-bar', `
        <style>
            :host{ display:flex; flex:none; width:510px; }
            .deck{ flex:1; display:flex; flex-direction:column; }
            button{ all:unset; display:flex; }
            .head{
                display:flex;
                justify-content:flex-end;
                box-sizing:border-box;
                height:26px;
                padding:6px 3px 0 0;
            }
            .band{
                display:flex;
                align-items:center;
                justify-content:flex-end;
                height:18px;
                padding-right:3px;
                background:#a3a3a3;
            }
            .form{
                display:grid;
                grid-template-columns:1fr 158px;
                gap:3px 7px;
                align-items:center;
                padding:6px 103px 7px 0;
            }
            .form > span{ text-align:right; }
            .form > check-item, .form > .push{ grid-column:2; }
            .push{
                justify-content:center;
                box-sizing:border-box;
                height:34px;
                align-items:center;
                border:1px solid #868686;
                border-radius:6px;
                background:#b0b0b0;
            }
            check-item{ --check:#b0421e; height:20px; padding:1px 0 1px 4px; }
            .tabs{
                display:flex;
                flex-direction:column;
                align-items:center;
                gap:8px;
                width:50px;
                padding:12px 6px 0 0;
                box-sizing:border-box;
            }
            .tabs button{
                justify-content:center;
                align-items:center;
                box-sizing:border-box;
                width:36px;
                height:34px;
                border:1px solid transparent;
                border-radius:6px;
            }
            .tabs .menu{ height:16px; margin-bottom:11px; }
            .tabs .on{ background:#939393; border-color:#878787; }
        </style>
        <div class="deck">
            <div class="head"><button aria-label="Close sidebar"><ui-icon name="close"></ui-icon></button></div>
            <div class="band"><button aria-label="More options"><ui-icon name="gear" size="12"></ui-icon></button></div>
            <div class="form">
                <span>Format:</span><drop-select label="Format" value="On-scre…&nbsp; w (4:3)"></drop-select>
                <span>Orientation:</span><drop-select label="Orientation" value="Landscape"></drop-select>
                <span>Background:</span><drop-select label="Background" value="None"></drop-select>
                <button class="push">Insert Image...</button>
                <span>Master Slide:</span><drop-select label="Master Slide" value="Title Slide"></drop-select>
                <check-item checked>Master Background</check-item>
                <check-item checked>Master Objects</check-item>
                <button class="push">Master View</button>
            </div>
            <div class="band"></div>
            <layout-grid></layout-grid>
        </div>
        <div class="tabs">
            <button class="menu" aria-label="Sidebar settings"><ui-icon name="menu"></ui-icon></button>
            <button class="on" aria-label="Properties"><ui-icon name="props"></ui-icon></button>
            <button aria-label="Styles"><ui-icon name="styles"></ui-icon></button>
            <button aria-label="Gallery"><ui-icon name="gallery"></ui-icon></button>
            <button aria-label="Navigator"><ui-icon name="navigator"></ui-icon></button>
            <button aria-label="Shapes"><ui-icon name="shapes"></ui-icon></button>
            <button aria-label="Slide transition"><ui-icon name="transition"></ui-icon></button>
            <button aria-label="Animation"><ui-icon name="film"></ui-icon></button>
            <button aria-label="Master slides"><ui-icon name="master"></ui-icon></button>
        </div>
    `);

    component('status-bar', `
        <style>
            :host{
                display:grid;
                grid-template-columns:586px 384px 422px 1fr;
                align-items:center;
                height:19px;
                padding:1px 0 0 10px;
                border-top:1px solid var(--line);
                font-size:12px;
            }
            div{ display:flex; align-items:center; gap:4px; }
            hr{ width:1px; height:14px; margin:0 4px; border:0; background:#999; }
            .size{ margin-left:14px; }
            .size + span{ margin-right:10px; }
            .zoom{ flex:1; justify-content:flex-end; padding-right:9px; }
            input{
                appearance:none;
                width:97px;
                height:8px;
                margin:0;
                background:linear-gradient(#5e5e5e,#5e5e5e) 0 50%/100% 1px no-repeat;
            }
            input::-webkit-slider-thumb{
                appearance:none;
                width:8px;
                height:8px;
                box-sizing:border-box;
                border:1px solid #333;
                border-radius:4px;
                background:#adadad;
            }
            b{ font-size:16px; }
        </style>
        <div>Slide 1 of 8<hr></div>
        <div>Title Slide</div>
        <div>
            <ui-icon name="pos"></ui-icon><span>-1.09 / -0.30</span>
            <ui-icon class="size" name="size"></ui-icon><span>0.00 x 0.00</span>
            <hr><ui-icon name="saved" size="14"></ui-icon><hr>
        </div>
        <div>
            <span>English (USA)</span>
            <div class="zoom"><hr><ui-icon name="move" size="14"></ui-icon><hr><b>−</b><input type="range" aria-label="Zoom"><b>+</b><hr>107%</div>
        </div>
    `);

    component('impress-window', `
        <style>
            :host{ flex:1; display:flex; flex-direction:column; min-width:0; }
            .work{ flex:1; display:flex; min-height:0; }
        </style>
        <title-bar><slot></slot></title-bar>
        <menu-bar></menu-bar>
        <tool-bar>
            <tool-button icon="newdoc" menu></tool-button>
            <tool-button icon="open" menu></tool-button>
            <tool-button icon="save" menu></tool-button>
            <hr>
            <tool-button icon="pdf"></tool-button>
            <tool-button icon="print"></tool-button>
            <hr>
            <tool-button icon="cut"></tool-button>
            <tool-button icon="copy"></tool-button>
            <tool-button icon="paste" menu></tool-button>
        </tool-bar>
        <tool-bar>
            <tool-button icon="pointer" pressed></tool-button>
            <tool-button icon="zoom"></tool-button>
            <hr>
            <tool-button icon="linecolor" menu></tool-button>
            <tool-button icon="fillcolor" menu></tool-button>
            <hr>
            <tool-button icon="line"></tool-button>
            <tool-button icon="rect"></tool-button>
            <tool-button icon="ellipse"></tool-button>
            <hr>
            <tool-button icon="arrow" menu></tool-button>
        </tool-bar>
        <div class="work">
            <slides-panel></slides-panel>
            <slide-canvas></slide-canvas>
            <side-bar></side-bar>
        </div>
        <status-bar></status-bar>
    `);

    component('place-item', `
        <style>
            :host{ display:block; }
            a{
                display:flex;
                align-items:center;
                gap:8px;
                height:36px;
                margin-bottom:2px;
                padding-left:14px;
                color:#111;
                text-decoration:none;
            }
            span{ display:flex; }
            :host([selected]) a{ background:#d85022; color:#fbe6de; }
        </style>
        <a href="#"><span></span><slot></slot></a>
    `, (el, root) => {
        root.querySelector('span').innerHTML = `<ui-icon name="${el.getAttribute('icon')}"></ui-icon>`;
    });

    component('file-dialog', `
        <style>
            :host{
                --box:#fff;
                --box-line:#c6c6c6;
                position:absolute;
                inset:79px 323px 52px 394px;
                display:flex;
                flex-direction:column;
                overflow:hidden;
                border-radius:12px 12px 0 0;
                background:#fff;
                color:#333;
                box-shadow:0 0 0 1px #5559,0 4px 18px 4px #0009;
            }
            header{
                display:grid;
                grid-template-columns:1fr auto 1fr;
                align-items:center;
                height:46px;
                padding:0 6px;
                border-bottom:1px solid #c0c0c0;
                background:#ebebeb;
            }
            button{
                all:unset;
                display:flex;
                align-items:center;
                justify-content:center;
                gap:5px;
                box-sizing:border-box;
                height:34px;
                border:1px solid #c6c6c6;
                background:#fff;
            }
            .cancel{ width:78px; border-radius:6px; }
            .actions{ display:flex; justify-content:flex-end; gap:6px; }
            .find{ width:36px; border-radius:6px; }
            .open{ width:78px; border-radius:6px; border-color:#0c7a1c; background:#14a32b; color:#fff; }
            .body{ flex:1; display:flex; min-height:0; }
            nav{ width:161px; padding-top:4px; border-right:1px solid #c0c0c0; background:#fafafa; white-space:nowrap; }
            nav hr{ height:1px; margin:5px 0; border:0; background:#dcdcdc; }
            .files{ flex:1; }
            .path{ display:flex; padding:6px; }
            .path button{ border-left-width:0; padding:0 10px; }
            .path button:first-child{ width:26px; padding:0; border-left-width:1px; border-radius:6px 0 0 6px; }
            .path button:last-child{ width:26px; padding:0; border-radius:0 6px 6px 0; background:#fafafa; }
            .path .here{ background:#d5d5d5; }
            table{ width:100%; border-collapse:collapse; table-layout:fixed; }
            th{
                height:24px;
                padding:0 0 0 7px;
                border-top:1px solid #f3f3f3;
                border-right:1px solid #f3f3f3;
                text-align:left;
                color:#9a9a9a;
                line-height:20px;
            }
            th div, td div{ display:flex; align-items:center; justify-content:space-between; }
            th:first-child{ padding:0 6px; }
            tbody{ outline:2px solid #f8c6b3; outline-offset:-2px; background:var(--accent); color:#fff; }
            td{ height:22px; padding:2px 0 0 9px; line-height:20px; }
            td:first-child{ padding-left:8px; }
            td:first-child div{ justify-content:flex-start; gap:8px; }
            td:nth-child(2){ padding:2px 7px 0 0; text-align:right; }
            footer{
                display:flex;
                justify-content:space-between;
                align-items:flex-start;
                height:50px;
                padding:6px 6px 0 10px;
                border-top:1px solid #c0c0c0;
                background:#fafafa;
            }
            check-item{ height:20px; margin-bottom:2px; }
            .opts{ padding-top:1px; }
            drop-select{ width:218px; }
        </style>
        <header>
            <button class="cancel">Cancel</button>
            <b><slot></slot></b>
            <div class="actions">
                <button class="find" aria-label="Search"><ui-icon name="search"></ui-icon></button>
                <button class="open">Open</button>
            </div>
        </header>
        <div class="body">
            <nav>
                <place-item icon="recent">Recent</place-item>
                <place-item icon="home">Home</place-item>
                <place-item icon="desktop" selected>Desktop</place-item>
                <place-item icon="document">Documents</place-item>
                <place-item icon="download">Downloads</place-item>
                <place-item icon="music">Music</place-item>
                <place-item icon="picture">Pictures</place-item>
                <place-item icon="video">Videos</place-item>
                <place-item icon="trash">Trash</place-item>
                <hr>
                <place-item icon="plus">Other Locations</place-item>
            </nav>
            <div class="files">
                <div class="path">
                    <button aria-label="Back"><ui-icon name="left"></ui-icon></button>
                    <button><ui-icon name="home"></ui-icon>user</button>
                    <button class="here"><ui-icon name="desktop"></ui-icon>Desktop</button>
                    <button aria-label="Forward"><ui-icon name="right"></ui-icon></button>
                </div>
                <table>
                    <colgroup><col><col style="width:61px"><col style="width:56px"><col style="width:76px"></colgroup>
                    <thead><tr><th><div>Name<ui-icon name="down"></ui-icon></div></th><th>Size</th><th>Type</th><th>Modified</th></tr></thead>
                    <tbody><tr><td><div><ui-icon name="audio"></ui-icon>Baseball.mp3</div></td><td>7.3 MB</td><td>Audio</td><td>17:15</td></tr></tbody>
                </table>
            </div>
        </div>
        <footer>
            <div class="opts">
                <check-item disabled>Preview</check-item>
                <check-item checked>Insert as Link</check-item>
            </div>
            <drop-select label="File type" value="All audio and video files"></drop-select>
        </footer>
    `);

    component('tool-tip', `
        <style>
            :host{
                position:absolute;
                left:309px;
                top:251px;
                width:330px;
                height:43px;
                display:flex;
                align-items:center;
                justify-content:center;
                border-radius:6px;
                background:#000000cc;
                color:#fff;
                white-space:nowrap;
            }
        </style>
        <slot></slot>
    `);

    component('mouse-pointer', `
        <style>
            :host{ position:absolute; left:462px; top:226px; pointer-events:none; }
            svg{ display:block; }
        </style>
        <svg width="18" height="26"><path d="M1.500 2v18l4-4 3.500 7.500 4-2-3.500-7H16z" fill="#2b2b2b" stroke="#fff" stroke-width="1.500"/></svg>
    `);
</script>
</html>
